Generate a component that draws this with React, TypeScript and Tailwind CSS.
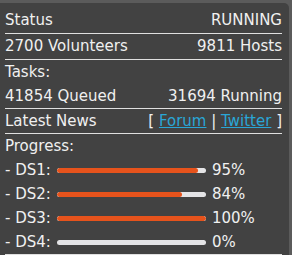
import * as React from "react";

const progress = [
  { name: "DS1", value: 95 },
  { name: "DS2", value: 84 },
  { name: "DS3", value: 100 },
  { name: "DS4", value: 0 },
];

function Bar({ value }: { value: number }) {
  return (
    <div className="ml-[6px] h-[5px] w-[149px] overflow-hidden rounded-full bg-[#e4e4e6]">
      <div className="h-full rounded-full bg-[#e6531c]" style={{ width: `${value}%` }} />
    </div>
  );
}

export default function App() {
  return (
    <div className="h-[255px] w-[292px] bg-[#5b5b5b] pr-[3px] pt-[3px]">
      <div className="h-full rounded-tr-[5px] bg-[#424242] pl-[5px] pr-[7px] pt-[5px] font-['DejaVu_Sans',sans-serif] text-[15px] leading-[24px] text-[#f0f0f0]">
        <div className="flex justify-between border-b border-[#e0e0e0] pb-px">
          <span>Status</span>
          <span>RUNNING</span>
        </div>
        <div className="flex justify-between border-b border-[#e0e0e0] pb-px">
          <span>2700 Volunteers</span>
          <span>9811 Hosts</span>
        </div>
        <div className="border-b border-[#e0e0e0]">
          <div>Tasks:</div>
          <div className="flex justify-between">
            <span>41854 Queued</span>
            <span>31694 Running</span>
          </div>
        </div>
        <div className="flex justify-between border-b border-[#e0e0e0]">
          <span>Latest News</span>
          <span>
            [ <a className="text-[#2aa6d6] underline" href="#">Forum</a> |{" "}
            <a className="text-[#2aa6d6] underline" href="#">Twitter</a> ]
          </span>
        </div>
        <div className="border-b border-[#e0e0e0]">
          <div>Progress:</div>
          {progress.map((p) => (
            <div key={p.name} className="flex items-center">
              <span>- {p.name}:</span>
              <Bar value={p.value} />
              <span className="ml-[6px]">{p.value}%</span>
            </div>
          ))}
        </div>
      </div>
    </div>
  );
}
